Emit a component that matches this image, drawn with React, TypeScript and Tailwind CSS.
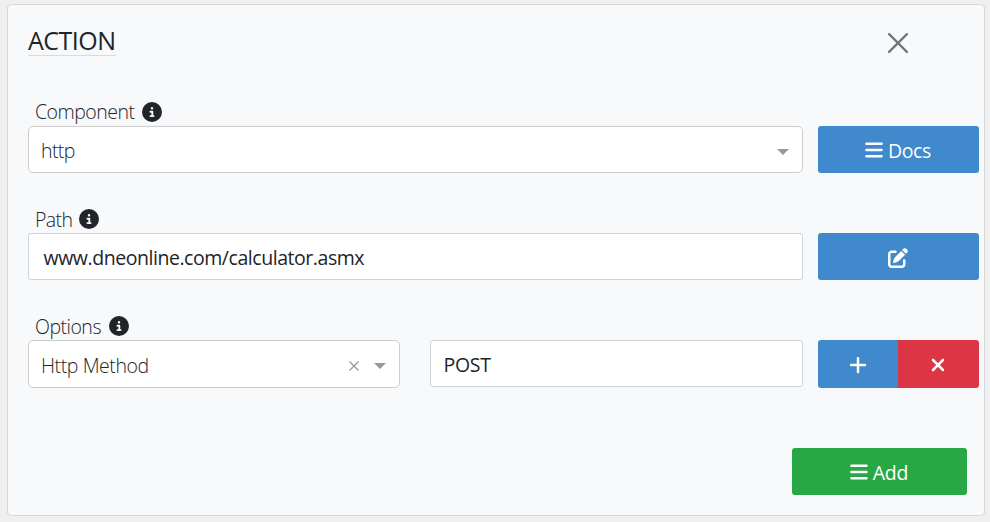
import type { ReactNode } from "react";
import { FaBars, FaCircleInfo, FaPenToSquare, FaPlus, FaXmark } from "react-icons/fa6";

function Label({ text, className }: { text: string; className: string }) {
  return (
    <div className="flex h-[30px] items-center gap-[7px] pt-[2px] pl-[7px]">
      <span className={`text-[19.5px] leading-[28px] font-light whitespace-nowrap ${className}`}>{text}</span>
      <FaCircleInfo className="size-5 shrink-0" />
    </div>
  );
}

function Caret() {
  return <span className="mt-[4px] h-0 w-0 border-x-[6px] border-t-[6px] border-x-transparent border-t-[#999]" />;
}

function Box({ children, className }: { children: ReactNode; className: string }) {
  return <div className={`flex items-center border bg-white ${className}`}>{children}</div>;
}

export default function App() {
  return (
    <div className="h-[522px] w-[990px] bg-[#efeff0] pt-1 pl-[7px] font-['Open_Sans','Noto_Sans',sans-serif] text-[#212529]">
      <main className="h-[512px] w-[978px] rounded-[4px] border border-[#d5d6d8] bg-[#f8f9fb] pl-5">
        <header className="flex h-[91px] justify-between pt-[21px] pr-[76px]">
          <h1 className="h-[30px] w-[88px] border-b border-[#d5dbe2] text-[25px] leading-[29px] tracking-[-0.5px]">ACTION</h1>
          <button aria-label="Close" className="mt-[7px] h-5 text-[#727476]">
            <svg viewBox="0 0 20 20" className="size-5" stroke="currentColor" strokeWidth="2.2" strokeLinecap="round" fill="none">
              <path d="M1.1 1.1 18.9 18.9M18.9 1.1 1.1 18.9" />
            </svg>
          </button>
        </header>

        <section className="h-[107px]">
          <Label text="Component" className="w-[100px] tracking-[-0.5px]" />
          <div className="flex gap-[15px]">
            <Box className="h-[47px] w-[775px] justify-between rounded-[5px] border-[#ccc] pr-[13px] pl-3">
              <span className="pt-[3px] text-[19.5px] font-light tracking-[-0.6px]">http</span>
              <Caret />
            </Box>
            <button className="flex h-[47px] w-[161px] items-center justify-center gap-1 rounded-[3px] bg-[#3f89cc] pr-[2px] text-[19.5px] tracking-[-0.4px] text-white">
              <FaBars className="size-5" />
              <span className="pt-[3px]">Docs</span>
            </button>
          </div>
        </section>

        <section className="h-[107px]">
          <Label text="Path" className="w-[37px] pt-[2px] tracking-[-0.6px]" />
          <div className="flex gap-[15px]">
            <Box className="h-[47px] w-[775px] rounded-[3px] border-[#ced4da] pl-[14.5px]">
              <span className="pt-[3px] text-[19.5px] tracking-[-0.45px]">www.dneonline.com/calculator.asmx</span>
            </Box>
            <button aria-label="Edit path" className="flex h-[47px] w-[161px] items-center justify-center rounded-[3px] bg-[#3f89cc] pt-[2px] pr-[2px] text-white">
              <FaPenToSquare className="size-5" />
            </button>
          </div>
        </section>

        <section className="h-[138px]">
          <Label text="Options" className="w-[67px] pt-[2px] tracking-[-0.5px]" />
          <div className="flex">
            <Box className="h-12 w-[372px] rounded-[5px] border-[#ccc] pr-[13px] pl-3">
              <span className="grow pt-[3px] text-[19.5px] font-light tracking-[-0.42px]">Http Method</span>
              <svg viewBox="0 0 10 10" className="mt-[4px] mr-[15px] size-[10px]" stroke="#999" strokeWidth="1.2" fill="none">
                <path d="M.5.5 9.5 9.5M9.5.5.5 9.5" />
              </svg>
              <Caret />
            </Box>
            <Box className="ml-[30px] h-[47px] w-[373px] rounded-[3px] border-[#ced4da] pl-[12.5px]">
              <span className="pt-[3px] text-[19.5px] tracking-[-0.3px]">POST</span>
            </Box>
            <div className="ml-[15px] flex h-12 overflow-hidden rounded-[3px] text-white">
              <button aria-label="Add option" className="flex w-20 items-center justify-center bg-[#3f89cc] pt-[2px] pr-px">
                <FaPlus className="size-5" />
              </button>
              <button aria-label="Remove option" className="flex w-[81px] items-center justify-center bg-[#dc3545] pt-[2px] pr-px">
                <FaXmark className="size-5" />
              </button>
            </div>
          </div>
        </section>

        <footer className="flex justify-end pr-[17px]">
          <button className="flex h-[47px] w-[175px] items-center justify-center gap-1 rounded-[3px] bg-[#28a745] pr-[2px] text-[19.5px] tracking-[-0.2px] text-white">
            <FaBars className="size-5" />
            <span className="pt-[3px]">Add</span>
          </button>
        </footer>
      </main>
    </div>
  );
}
